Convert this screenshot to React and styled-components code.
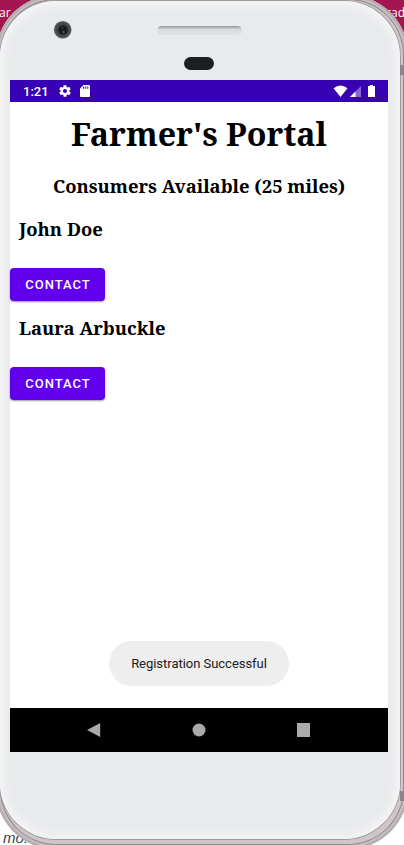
import React from "react";
import styled, { createGlobalStyle } from "styled-components";

const consumers = ["John Doe", "Laura Arbuckle"];

const StatusBar = () => (
  <Status>
    <Clock>1:21</Clock>
    <svg width="14" height="14" viewBox="0 0 24 24" fill="#fff">
      <path d="M19.4 13a7.6 7.6 0 0 0 0-2l2.1-1.6c.2-.2.3-.5.1-.7l-2-3.4c-.1-.2-.4-.3-.6-.2l-2.5 1a7 7 0 0 0-1.7-1L14.5 2.4c0-.2-.2-.4-.5-.4h-4c-.3 0-.5.2-.5.4l-.3 2.7a7 7 0 0 0-1.7 1l-2.5-1c-.2-.1-.5 0-.6.2l-2 3.4c-.2.2-.1.5.1.7L4.6 11a7.6 7.6 0 0 0 0 2l-2.1 1.6c-.2.2-.3.5-.1.7l2 3.4c.1.2.4.3.6.2l2.5-1c.5.4 1.1.8 1.7 1l.3 2.7c0 .2.2.4.5.4h4c.3 0 .5-.2.5-.4l.3-2.7c.6-.2 1.2-.6 1.7-1l2.5 1c.2.1.5 0 .6-.2l2-3.4c.2-.2.1-.5-.1-.7zM12 15.5a3.5 3.5 0 1 1 0-7 3.5 3.5 0 0 1 0 7z" />
    </svg>
    <CardIcon width="10" height="12" viewBox="0 0 10 12">
      <path d="M3.5 0H9q1 0 1 1v10q0 1-1 1H1q-1 0-1-1V3.5z" fill="#fff" />
      <path d="M3.6 1.5v2.3M5.7 1.5v2.3M7.8 1.5v2.3" stroke="#3700b3" />
    </CardIcon>
    <Signals width="43" height="13" viewBox="0 0 43 13">
      <path d="M.5 3.3Q7.5-2.3 14.5 3.3L7.5 12z" fill="#fff" />
      <path d="M28 1v11H17z" fill="#fff" opacity=".4" />
      <path d="M22.5 6.5V12H17z" fill="#fff" />
      <path d="M35 1h2V0h3v1h2v11h-7z" fill="#fff" />
    </Signals>
  </Status>
);

const NavBar = () => (
  <Nav>
    <svg width="14" height="14" viewBox="0 0 14 14">
      <path d="M0 7L13.2 0v14z" fill="#aaa" />
    </svg>
    <svg width="14" height="14" viewBox="0 0 14 14">
      <circle cx="7" cy="7" r="6.5" fill="#aaa" />
    </svg>
    <svg width="14" height="14" viewBox="0 0 14 14">
      <path d="M0 0h13v14H0z" fill="#aaa" />
    </svg>
  </Nav>
);

const App = () => {
  return (
    <Desktop>
      <GlobalStyle />
      <Banner>
        <span>ar</span>
        <span>rad</span>
      </Banner>
      <PageText>mo.</PageText>
      <Frame>
        <Face>
          <Forehead>
            <svg width="378" height="80" viewBox="0 0 378 80">
              <defs>
                <linearGradient id="speaker" x2="0" y2="1">
                  <stop offset="0" stopColor="#92969d" />
                  <stop offset=".25" stopColor="#bfc2c8" />
                  <stop offset=".4" stopColor="#d9dade" />
                  <stop offset="1" stopColor="#e0e1e3" />
                </linearGradient>
              </defs>
              <circle cx="52.7" cy="29.7" r="8.8" fill="#55575a" />
              <circle cx="52.7" cy="29.7" r="7" fill="#424447" />
              <circle cx="53" cy="30" r="4.6" fill="#17191b" />
              <circle cx="53.5" cy="32" r="1.3" fill="#55522c" />
              <circle cx="52.5" cy="28" r="1" fill="#34363c" />
              <rect x="147.5" y="26" width="84" height="9" rx="4" fill="url(#speaker)" />
              <rect x="174" y="57" width="30" height="13" rx="6.5" fill="#1c1e21" />
            </svg>
          </Forehead>
          <Screen>
            <StatusBar />
            <Content>
              <Title>Farmer's Portal</Title>
              <Subtitle>Consumers Available (25 miles)</Subtitle>
              {consumers.map((name) => (
                <Consumer key={name}>
                  <Name>{name}</Name>
                  <Contact>CONTACT</Contact>
                </Consumer>
              ))}
              <Toast>Registration Successful</Toast>
            </Content>
            <NavBar />
          </Screen>
        </Face>
        <SideKey $top={70} />
        <SideKey $top={796} />
      </Frame>
    </Desktop>
  );
};

export default App;

const GlobalStyle = createGlobalStyle`
  body {
    margin: 0;
    overflow: hidden;
  }
  * {
    box-sizing: border-box;
  }
  svg {
    display: block;
    flex-shrink: 0;
  }
`;

const Desktop = styled.div`
  position: relative;
  width: 404px;
  height: 845px;
  overflow: hidden;
  display: flow-root;
  background: #fff;
  font-family: Roboto, sans-serif;
`;

const Banner = styled.div`
  position: absolute;
  top: 0;
  left: -1px;
  right: -1px;
  height: 32px;
  padding-top: 6px;
  display: flex;
  justify-content: space-between;
  background: #a31650;
  color: #fff;
  font: 12px/14px "Open Sans", sans-serif;
`;

const PageText = styled.i`
  position: absolute;
  left: 3px;
  top: 829px;
  color: #3c4650;
  font: italic 15px/17px "Liberation Sans", sans-serif;
`;

/* metal rim, slightly wider than the window */
const Frame = styled.div`
  position: relative;
  width: 412px;
  height: 854px;
  margin: -5px 0 0 -4px;
  padding: 6px 8px 10px 4px;
  border-radius: 60px;
  background: #cfc6ca;
  box-shadow: inset 0 0 0 2px #b5adb1, inset 0 0 0 4px #c6bec2,
    inset 0 0 0 5px #8f898d;
`;

const Face = styled.div`
  width: 400px;
  height: 838px;
  padding: 0 12px 0 10px;
  border-radius: 56px;
  background: #e9eaec;
  box-shadow: 0 0 0 1px #a09a9e, inset 0 0 9px 4px #f5f6f7;
`;

const Forehead = styled.div`
  display: flow-root;
  height: 79px;
  svg {
    margin-top: -1px;
  }
`;

const Screen = styled.div`
  width: 378px;
  height: 672px;
  display: flex;
  flex-direction: column;
  background: #fff;
`;

const Status = styled.div`
  height: 22px;
  padding: 0 12px 0 13px;
  display: flex;
  align-items: center;
  background: #3700b3;
  color: #fff;
`;

const Clock = styled.span`
  width: 35px;
  font-size: 13px;
  font-weight: 500;
  line-height: 22px;
  padding-top: 1px;
`;

const CardIcon = styled.svg`
  margin-left: 8px;
`;

const Signals = styled.svg`
  margin-left: auto;
`;

const Content = styled.main`
  flex: 1;
  display: flex;
  flex-direction: column;
  color: #000;
`;

const Heading = styled.h1`
  margin: 0;
  font-family: "Noto Serif", "Droid Serif", "DejaVu Serif", serif;
  font-weight: 700;
  white-space: nowrap;
`;

const Title = styled(Heading)`
  text-align: center;
  font-size: 32.2px;
  line-height: 44px;
  margin-top: 10px;
`;

const Subtitle = styled(Heading).attrs({ as: "h2" })`
  text-align: center;
  font-size: 18.4px;
  line-height: 24px;
  margin: 18px 0 17px;
`;

const Consumer = styled.section`
  height: 99px;
`;

const Name = styled(Heading).attrs({ as: "h3" })`
  font-size: 18.4px;
  line-height: 24px;
  padding: 2px 0 0 9px;
`;

const Contact = styled.button`
  display: block;
  width: 95px;
  height: 33px;
  margin-top: 27px;
  padding: 1px 0 0 1px;
  border: 0;
  border-radius: 4px;
  background: #6200ee;
  color: #fff;
  box-shadow: 0 1px 2px rgba(0, 0, 0, 0.4);
  font: 500 13px/32px Roboto, sans-serif;
  letter-spacing: 1px;
`;

const Toast = styled.div`
  width: 180px;
  height: 45px;
  margin: auto 0 22px 99px;
  border-radius: 23px;
  background: #eee;
  color: #202020;
  text-align: center;
  font-size: 13px;
  line-height: 45px;
  letter-spacing: -0.03px;
`;

const Nav = styled.nav`
  height: 44px;
  padding: 0 77px;
  display: flex;
  align-items: center;
  justify-content: space-between;
  background: #000;
`;

const SideKey = styled.i`
  position: absolute;
  top: ${(props) => props.$top}px;
  right: 3px;
  width: 5px;
  height: 10px;
  background: #8b8589;
`;
